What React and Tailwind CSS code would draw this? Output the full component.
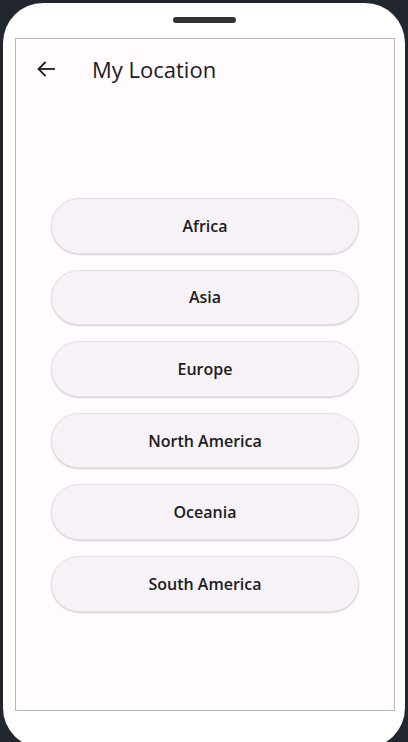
import React from "react";

const regions = ["Africa", "Asia", "Europe", "North America", "Oceania", "South America"];

function BackArrow() {
  return (
    <svg width="24" height="24" viewBox="0 0 24 24" fill="none" stroke="#1d1b20" strokeWidth="1.8" strokeLinecap="square">
      <path d="M20 12H5" />
      <path d="M11 5.5L4.5 12l6.5 6.5" />
    </svg>
  );
}

export default function App() {
  return (
    <main className="h-[742px] w-[408px] overflow-hidden bg-[#22262d]" style={{ fontFamily: "'Open Sans', 'Noto Sans', sans-serif" }}>
      <div className="ml-[3px] mt-[3px] h-[745px] w-[402px] rounded-[40px] bg-white pt-[14px]">
        {/* speaker notch */}
        <div className="mx-auto h-[6px] w-[63px] rounded-full bg-[#333333]" />

        {/* screen */}
        <div className="ml-[12px] mt-[15px] h-[673px] w-[380px] border border-[#b9b9b9] bg-[#fffbfe]">
          <div className="flex h-[60px] items-center pl-[18px]">
            <BackArrow />
            <h1 className="ml-[34px] text-[22px] leading-none text-[#1d1b20]">My Location</h1>
          </div>

          <div className="mt-[99px] flex flex-col items-center gap-4">
            {regions.map((r) => (
              <button
                key={r}
                className="h-[55.6px] w-[308px] rounded-full border border-[#e4dfe6] bg-[#f6f2f8] text-[16px] font-semibold text-[#1d1b20] shadow-[0_1px_1.5px_rgba(0,0,0,0.18)]"
              >
                {r}
              </button>
            ))}
          </div>
        </div>
      </div>
    </main>
  );
}
